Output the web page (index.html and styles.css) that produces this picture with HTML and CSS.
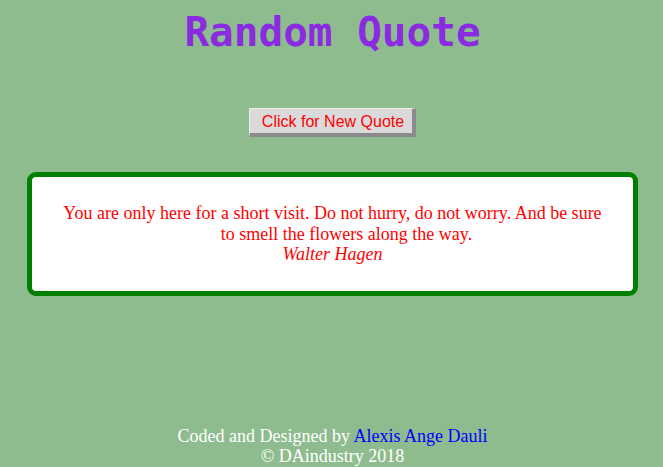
FILE: index.html
```html
<!DOCTYPE html>
<html>
<head>
<meta charset="utf-8">
<link rel="stylesheet" href="styles.css">
</head>
<body>
<div class="page">
  <h1 class="title">Random Quote</h1>
  <div class="btn-row"><button class="btn">Click for New Quote</button></div>
  <div class="quote-box">
    <p class="quote">You are only here for a short visit. Do not hurry, do not worry. And be sure <span class="indent"></span>to smell the flowers along the way.<br><em class="author">Walter Hagen</em></p>
  </div>
  <footer class="footer">Coded and Designed by <a class="link" href="#">Alexis Ange Dauli</a><br>© DAindustry 2018</footer>
</div>
</body>
</html>
```
FILE: styles.css
```css
html, body { margin: 0; padding: 0; }
body {
  background: #8fbc8f;
  font-family: "Liberation Serif", serif;
  height: 467px;
  overflow: hidden;
}
.page {
  display: flex;
  flex-direction: column;
  height: 467px;
  padding: 0 25px 0 27px;
  box-sizing: border-box;
}
.title {
  margin: 9px 0 0;
  text-align: center;
  font-family: "DejaVu Sans Mono", monospace;
  font-weight: bold;
  font-size: 41px;
  line-height: 47px;
  color: #8a2be2;
}
.btn-row { display: flex; justify-content: center; margin-top: 52px; }
.btn {
  font-family: "Liberation Sans", sans-serif;
  font-size: 16px;
  line-height: 18px;
  color: #ff0000;
  background: #dadada;
  border-style: solid;
  border-width: 1px 4px 4px 1px;
  border-color: #ececec #8a8a8a #8a8a8a #ececec;
  padding: 4px 8px 2px 12px;
  margin-left: 0;
}
.quote-box {
  margin-top: 35px;
  background: #fff;
  border: 5px solid #008000;
  border-radius: 9px;
  padding: 26px 30px 26px;
}
.quote {
  margin: 0;
  text-align: center;
  color: #ff0000;
  font-size: 18px;
  line-height: 20.5px;
}
.indent { display: inline-block; width: 28px; }
.author { font-style: italic; }
.footer {
  margin-top: auto;
  text-align: center;
  color: #fff;
  font-size: 18px;
  line-height: 20px;
  padding-bottom: 1px;
}
.link { color: #0000ff; text-decoration: none; }
```
